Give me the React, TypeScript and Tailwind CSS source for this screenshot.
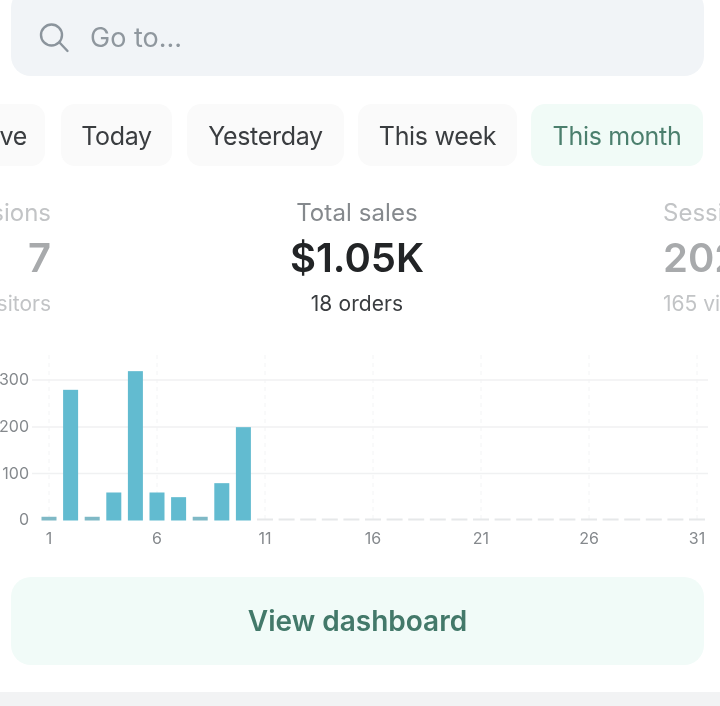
const chips = [
  { label: 'Live', cls: 'w-[83px] ml-[-38px] bg-[#fafafa] text-[#3a3d40]' },
  { label: 'Today', cls: 'w-[111px] ml-[1px] bg-[#fafafa] text-[#3a3d40]' },
  { label: 'Yesterday', cls: 'w-[157px] bg-[#fafafa] text-[#3a3d40]' },
  { label: 'This week', cls: 'w-[159px] ml-[-1px] bg-[#fafafa] text-[#3a3d40]' },
  { label: 'This month', cls: 'w-[172px] ml-[-1px] bg-[#f1fbf7] text-[#4b7f6d]' },
];

const values = [8, 280, 8, 60, 320, 60, 50, 8, 80, 200];
const days = Array.from({ length: 31 }, (_, i) => i);
const ticks = [1, 6, 11, 16, 21, 26, 31];
const barX = (i: number) => 49 + 21.6 * i;

function Chart() {
  return (
    <svg viewBox="0 350 720 205" className="block w-[720px] h-[205px] mt-[30px] shrink-0">
      {ticks.map(t => (
        <line key={t} x1={barX(t - 1)} x2={barX(t - 1)} y1={355} y2={520} stroke="#f3f4f5" strokeWidth="1" strokeDasharray="4 4" />
      ))}
      {[380, 427, 473.5].map(y => (
        <line key={y} x1={32} x2={708} y1={y} y2={y} stroke="#f0f1f2" strokeWidth="1.5" />
      ))}
      {days.map(i => {
        const v = values[i];
        if (v === undefined) {
          return <rect key={i} x={barX(i) - 8} y={518.5} width={16} height={2} fill="#e6e8e9" />;
        }
        const h = v * 0.4667;
        return <rect key={i} x={barX(i) - 7.5} y={520.5 - h} width={15} height={h} fill={v < 10 ? '#7fb9c6' : '#62bbd0'} />;
      })}
      {[['300', 379], ['200', 426], ['100', 473], ['0', 519]].map(([label, y]) => (
        <text key={label} x={29} y={Number(y) + 6} textAnchor="end" fontSize="16" fill="#85898d" fontFamily="Inter, sans-serif">{label}</text>
      ))}
      {ticks.map(t => (
        <text key={t} x={barX(t - 1)} y={544} textAnchor="middle" fontSize="16" fill="#85898d" fontFamily="Inter, sans-serif">{t}</text>
      ))}
    </svg>
  );
}

export default function App() {
  return (
    <div className="w-[720px] h-[706px] overflow-hidden flex flex-col bg-white font-['Inter',sans-serif] blur-[0.5px]">
      <div className="ml-[11px] w-[693px] mt-[-12px] h-[88px] shrink-0 rounded-[20px] bg-[#f1f4f7] flex items-center gap-[20px] pl-[28px] pt-[12px]">
        <svg viewBox="0 0 31 31" className="w-[31px] h-[31px] shrink-0" fill="none" stroke="#8b949c" strokeWidth="2.4" strokeLinecap="round">
          <circle cx="12.5" cy="12" r="10.5" />
          <line x1="20.5" y1="19.5" x2="28.5" y2="28" />
        </svg>
        <span className="text-[27px] text-[#8f979e]">Go to...</span>
      </div>

      <div className="flex gap-[15px] mt-[28px] h-[62px] shrink-0">
        {chips.map(c => (
          <div key={c.label} className={`shrink-0 rounded-[14px] flex items-center justify-center pt-[3px] text-[25px] tracking-[-0.3px] ${c.cls}`}>
            {c.label}
          </div>
        ))}
      </div>

      <div className="grid grid-cols-[51px_1fr_57px] mt-[32px] shrink-0 whitespace-nowrap">
        <div className="flex flex-col items-end overflow-hidden text-[#c2c4c6]">
          <span className="text-[24px] leading-[30px]">Sessions</span>
          <span className="text-[40px] leading-[60px] font-semibold text-[#a8aaac]">7</span>
          <span className="text-[21px] leading-[32px]">12 visitors</span>
        </div>
        <div className="flex flex-col items-center">
          <span className="text-[24px] leading-[30px] tracking-[0.1px] text-[#85898d]">Total sales</span>
          <span className="text-[40px] leading-[60px] font-semibold text-[#222426]">$1.05K</span>
          <span className="text-[21px] leading-[32px] tracking-[0.1px] text-[#3a3d40]">18 orders</span>
        </div>
        <div className="flex flex-col items-start overflow-hidden text-[#c2c4c6]">
          <span className="text-[24px] leading-[30px]">Sessions</span>
          <span className="text-[40px] leading-[60px] font-semibold text-[#a8aaac]">202</span>
          <span className="text-[21px] leading-[32px]">165 visitors</span>
        </div>
      </div>

      <Chart />

      <div className="ml-[11px] w-[693px] mt-[22px] h-[88px] shrink-0 rounded-[20px] bg-[#f1fbf8] flex items-center justify-center text-[28px] font-semibold text-[#43796a]">
        View dashboard
      </div>

      <div className="mt-[27px] flex-1 bg-[#f2f3f4]" />
    </div>
  );
}
